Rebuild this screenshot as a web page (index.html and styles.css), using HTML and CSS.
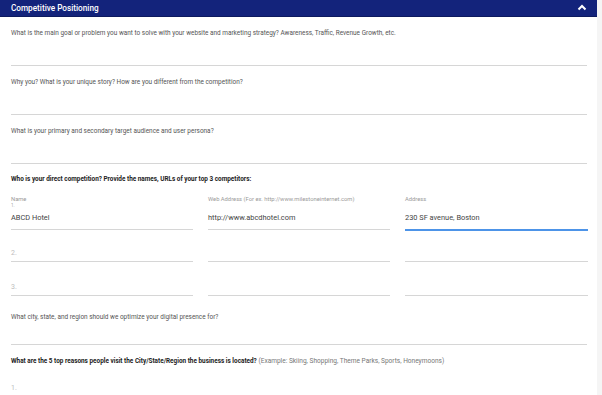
FILE: index.html
```html
<!DOCTYPE html>
<html lang="en">
<head>
  <meta charset="UTF-8" />
  <meta name="viewport" content="width=device-width, initial-scale=1.0" />
  <title>Competitive Positioning</title>
  <link rel="stylesheet" href="styles.css">
</head>
<body>
  <div class="panel">
    <div class="panel-header">
      <span class="panel-title">Competitive Positioning</span>
      <svg class="chevron" width="10" height="7" viewBox="0 0 10 7">
        <polyline points="1.5,5.5 5,2 8.5,5.5" fill="none" stroke="#fff" stroke-width="2" />
      </svg>
    </div>

    <div class="panel-body">
      <div class="question">
        <label>What is the main goal or problem you want to solve with your website and marketing strategy? Awareness, Traffic, Revenue Growth, etc.</label>
        <div class="answer"></div>
      </div>

      <div class="question">
        <label>Why you? What is your unique story? How are you different from the competition?</label>
        <div class="answer"></div>
      </div>

      <div class="question">
        <label>What is your primary and secondary target audience and user persona?</label>
        <div class="answer"></div>
      </div>

      <div class="question bold-q">
        <label class="strong">Who is your direct competition? Provide the names, URLs of your top 3 competitors:</label>
      </div>

      <div class="competitors">
        <div class="cell first">
          <div class="mini-label">Name</div>
          <div class="mini-hint">1.</div>
          <div class="value">ABCD Hotel</div>
        </div>
        <div class="cell first">
          <div class="mini-label">Web Address (For ex. http://www.milestoneinternet.com)</div>
          <div class="mini-hint">&nbsp;</div>
          <div class="value">http://www.abcdhotel.com</div>
        </div>
        <div class="cell first active">
          <div class="mini-label">Address</div>
          <div class="mini-hint">&nbsp;</div>
          <div class="value">230 SF avenue, Boston</div>
        </div>

        <div class="cell"><div class="placeholder">2.</div></div>
        <div class="cell"><div class="placeholder">&nbsp;</div></div>
        <div class="cell"><div class="placeholder">&nbsp;</div></div>

        <div class="cell"><div class="placeholder last">3.</div></div>
        <div class="cell"><div class="placeholder last">&nbsp;</div></div>
        <div class="cell"><div class="placeholder last">&nbsp;</div></div>
      </div>

      <div class="question city">
        <label>What city, state, and region should we optimize your digital presence for?</label>
        <div class="answer short"></div>
      </div>

      <div class="question reasons">
        <label><span class="strong">What are the 5 top reasons people visit the City/State/Region the business is located?</span> (Example: Skiing, Shopping, Theme Parks, Sports, Honeymoons)</label>
        <div class="placeholder reason">1.</div>
      </div>
    </div>
  </div>
</body>
</html>
```

FILE: styles.css
```css
body {
  margin: 0;
  background: #f5f5f5;
  font-family: Roboto, "Liberation Sans", Arial, sans-serif;
  height: 395px;
  overflow: hidden;
}

.panel {
  width: 597px;
  background: #fff;
  min-height: 395px;
}

.panel-header {
  height: 17px;
  background: #13237b;
  border-bottom: 1px solid #0d1a5e;
  display: flex;
  align-items: center;
  justify-content: space-between;
  padding: 0 10px 0 11px;
  box-sizing: border-box;
}

.panel-title {
  color: #fff;
  font-size: 8.2px;
  font-weight: 500;
}

.chevron {
  display: block;
  margin-top: -1px;
}

.panel-body {
  padding: 0 10px 0 11px;
}

.question {
  margin-top: 11px;
}

label {
  display: block;
  font-size: 6.45px;
  line-height: 10px;
  color: #555;
}

.strong {
  font-weight: 700;
  color: #222;
  font-size: 6.4px;
}

.answer {
  height: 27px;
  border-bottom: 1px solid #d6d6d6;
}

.answer.short {
  height: 22px;
}

.bold-q {
  margin-top: 10px;
}

.competitors {
  display: grid;
  grid-template-columns: 182px 182px 183px;
  column-gap: 15px;
  margin-top: 11px;
}

.cell {
  border-bottom: 1px solid #d6d6d6;
}

.cell.active {
  border-bottom: 2px solid #4d94e8;
  margin-bottom: -1px;
}

.mini-label {
  font-size: 5.8px;
  line-height: 5px;
  color: #9a9a9a;
  padding-top: 2px;
}

.mini-hint {
  font-size: 4.6px;
  line-height: 4px;
  color: #a8a8a8;
  margin-top: 2px;
}

.value {
  font-size: 7.4px;
  line-height: 10px;
  color: #444;
  margin-top: 5px;
  padding-bottom: 6px;
}

.placeholder {
  font-size: 7px;
  line-height: 10px;
  color: #bdbdbd;
  padding: 18px 0 3px;
}

.placeholder.last {
  padding-top: 20px;
}

.city {
  margin-top: 16px;
}

.reasons {
  margin-top: 11px;
}

.reasons label {
  color: #777;
  font-size: 6.55px;
}

.placeholder.reason {
  padding-top: 17px;
}
```
